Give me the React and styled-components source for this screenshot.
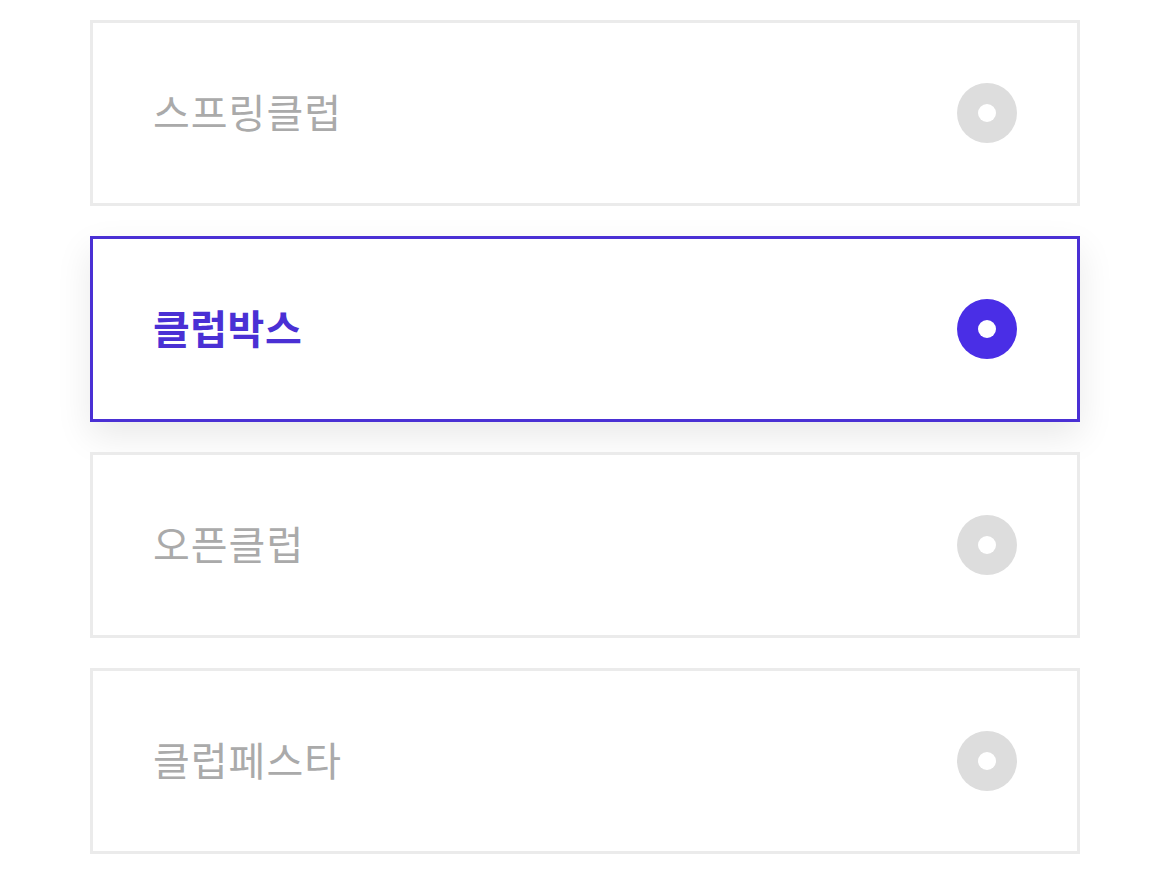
import React, { useState } from 'react'
import styled, { createGlobalStyle } from 'styled-components'

const clubs = ['스프링클럽', '클럽박스', '오픈클럽', '클럽페스타']

export default () => {
  const [selected, setSelected] = useState(1)

  return (
    <>
      <GlobalStyle />
      <List>
        {clubs.map((name, i) => (
          <Option key={name} $active={i === selected} onClick={() => setSelected(i)}>
            <Label $active={i === selected}>{name}</Label>
            <Radio $active={i === selected} />
          </Option>
        ))}
      </List>
    </>
  )
}

const GlobalStyle = createGlobalStyle`
  * {
    box-sizing: border-box;
  }
  body {
    margin: 0;
    background: #ffffff;
    font-family: "Noto Sans CJK KR", "Noto Sans", sans-serif;
  }
`

const List = styled.div`
  display: flex;
  flex-direction: column;
  gap: 30px;
  padding: 20px 90px;
`

const Option = styled.div`
  display: flex;
  align-items: center;
  justify-content: space-between;
  height: 186px;
  padding: 0 60px;
  background: #ffffff;
  border: 3px solid ${p => (p.$active ? '#4a30d4' : '#ebebeb')};
  box-shadow: ${p => (p.$active ? '0 14px 34px rgba(0, 0, 0, 0.09)' : 'none')};
  cursor: pointer;
`

const Label = styled.span`
  margin-top: -4px;
  font-size: 40px;
  font-weight: ${p => (p.$active ? 600 : 400)};
  letter-spacing: ${p => (p.$active ? '0.5px' : '1px')};
  color: ${p => (p.$active ? '#4a30d4' : '#aaaaaa')};
`

const Radio = styled.span`
  position: relative;
  width: 60px;
  height: 60px;
  border-radius: 50%;
  background: ${p => (p.$active ? '#4a2ee6' : '#dddddd')};

  &::after {
    content: '';
    position: absolute;
    top: 50%;
    left: 50%;
    width: 18px;
    height: 18px;
    margin: -9px 0 0 -9px;
    border-radius: 50%;
    background: #ffffff;
  }
`
